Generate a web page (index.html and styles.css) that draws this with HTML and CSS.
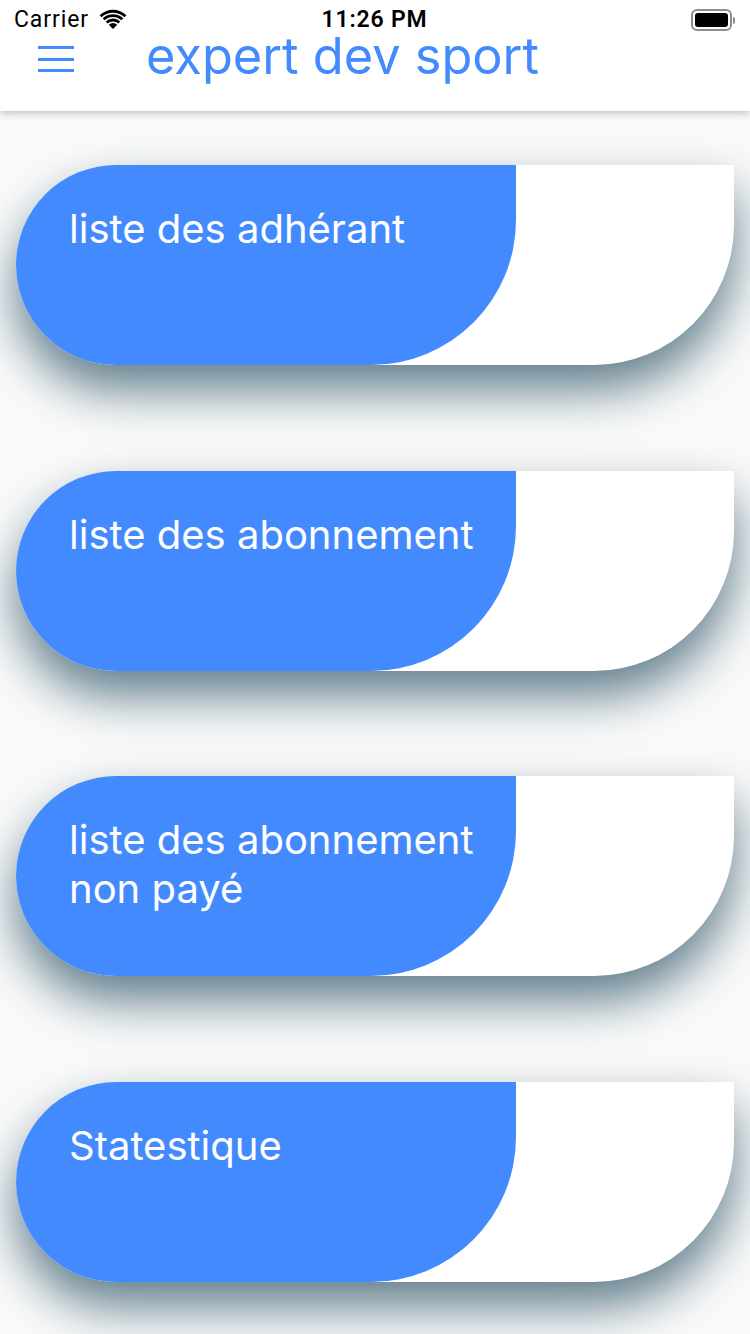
FILE: index.html
```html
<!DOCTYPE html>
<html>
<head>
<meta charset="utf-8">
<link rel="stylesheet" href="styles.css">
</head>
<body>
<header class="header">
  <div class="status">
    <div class="status-left">
      <span class="carrier">Carrier</span>
      <svg class="wifi" width="30" height="21" viewBox="0 0 30 22">
        <path d="M15 21 L10.6 16.4 A6.5 6.5 0 0 1 19.4 16.4 Z" fill="#000"/>
        <path d="M7.4 13.1 A11 11 0 0 1 22.6 13.1 L20.6 15.2 A8.2 8.2 0 0 0 9.4 15.2 Z" fill="#000"/>
        <path d="M4.2 9.8 A15.6 15.6 0 0 1 25.8 9.8 L23.8 11.9 A12.8 12.8 0 0 0 6.2 11.9 Z" fill="#000"/>
        <path d="M1 6.5 A20.3 20.3 0 0 1 29 6.5 L27 8.6 A17.5 17.5 0 0 0 3 8.6 Z" fill="#000"/>
      </svg>
    </div>
    <span class="time">11:26 PM</span>
    <div class="status-right">
      <div class="battery"><div class="battery-body"><div class="battery-level"></div></div><div class="battery-nub"></div></div>
    </div>
  </div>
  <div class="appbar">
    <div class="menu"><span></span><span></span><span></span></div>
    <h1 class="title">expert dev sport</h1>
  </div>
</header>
<main class="list">
  <div class="card"><div class="card-fill"><span class="card-text">liste des adhérant</span></div></div>
  <div class="card"><div class="card-fill"><span class="card-text">liste des abonnement</span></div></div>
  <div class="card"><div class="card-fill"><span class="card-text">liste des abonnement non payé</span></div></div>
  <div class="card"><div class="card-fill"><span class="card-text">Statestique</span></div></div>
</main>
</body>
</html>
```
FILE: styles.css
```css
html, body {
  margin: 0;
  padding: 0;
}
body {
  width: 750px;
  height: 1334px;
  overflow: hidden;
  background: #fafafa;
  font-family: Inter, Roboto, "Liberation Sans", sans-serif;
}
.header {
  position: relative;
  z-index: 2;
  height: 111px;
  background: #fff;
  box-shadow: 0 2px 8px rgba(0,0,0,0.25);
}
.status {
  height: 40px;
  display: grid;
  grid-template-columns: 1fr auto 1fr;
  align-items: center;
  padding: 0 15px 0 14px;
}
.status-left {
  display: flex;
  align-items: center;
  gap: 9px;
}
.status-right {
  display: flex;
  justify-content: flex-end;
}
.carrier {
  font-size: 23px;
  line-height: 26px;
  letter-spacing: 0.9px;
  color: #000;
  font-family: Roboto, "Liberation Sans", sans-serif;
}
.wifi { margin-top: -1px; }
.time {
  font-size: 23px;
  line-height: 26px;
  font-weight: 600;
  letter-spacing: 0.8px;
  color: #000;
  font-family: Roboto, "Liberation Sans", sans-serif;
}
.battery {
  display: flex;
  align-items: center;
}
.battery-body {
  border: 2px solid #8e8e8e;
  border-radius: 6px;
  padding: 2px;
  width: 33px;
  height: 14px;
}
.battery-level {
  width: 100%;
  height: 100%;
  background: #000;
  border-radius: 3px;
}
.battery-nub {
  width: 2px;
  height: 7px;
  background: #8e8e8e;
  border-radius: 0 2px 2px 0;
  margin-left: 1px;
}
.appbar {
  display: flex;
  align-items: center;
  height: 38px;
  padding-left: 38px;
}
.menu {
  display: flex;
  flex-direction: column;
  gap: 8.5px;
  width: 36px;
}
.menu span {
  display: block;
  height: 3px;
  background: #448aff;
}
.title {
  margin: 0 0 0 72px;
  font-size: 50.5px;
  font-weight: 400;
  color: #448aff;
  line-height: 38px;
  position: relative;
  top: -3px;
}
.list {
  display: flex;
  flex-direction: column;
  gap: 105.5px;
  padding-top: 54px;
}
.card {
  margin-left: 16px;
  width: 718px;
  height: 200px;
  background: #fff;
  border-radius: 100px 0 140px 100px;
  box-shadow: 0 25px 50px #607d8b;
  flex-shrink: 0;
}
.card-fill {
  width: 500px;
  height: 200px;
  background: #448aff;
  border-radius: 100px 0 145px 100px;
  box-sizing: border-box;
  padding: 39px 30px 0 53px;
}
.card-text {
  display: block;
  color: #fff;
  font-size: 40px;
  line-height: 49px;
  max-width: 430px;
}
```
